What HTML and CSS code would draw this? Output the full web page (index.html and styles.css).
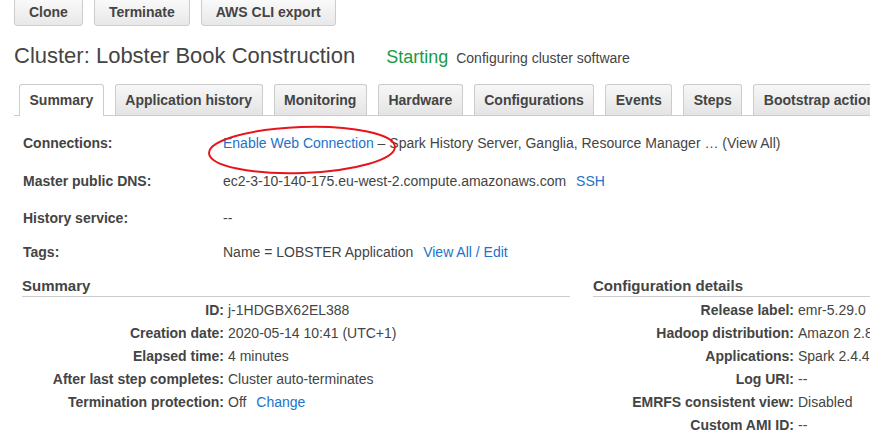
FILE: index.html
```html
<!DOCTYPE html>
<html>
<head>
<meta charset="utf-8">
<link rel="stylesheet" href="styles.css">
</head>
<body>
<div class="page">
  <div class="toolbar">
    <button class="btn">Clone</button>
    <button class="btn">Terminate</button>
    <button class="btn">AWS CLI export</button>
  </div>
  <div class="title-row">
    <h1 class="title">Cluster: Lobster Book Construction</h1>
    <span class="status">Starting</span>
    <span class="status-msg">Configuring cluster software</span>
  </div>
  <div class="tabs">
    <div class="tab active">Summary</div>
    <div class="tab">Application history</div>
    <div class="tab">Monitoring</div>
    <div class="tab">Hardware</div>
    <div class="tab">Configurations</div>
    <div class="tab">Events</div>
    <div class="tab">Steps</div>
    <div class="tab">Bootstrap actions</div>
  </div>
  <div class="info">
    <div class="info-row r1">
      <div class="info-label">Connections:</div>
      <div class="info-value"><a class="link">Enable Web Connection</a> – Spark History Server, Ganglia, Resource Manager … (View All)</div>
    </div>
    <div class="info-row r2">
      <div class="info-label">Master public DNS:</div>
      <div class="info-value">ec2-3-10-140-175.eu-west-2.compute.amazonaws.com <a class="link sp">SSH</a></div>
    </div>
    <div class="info-row r3">
      <div class="info-label">History service:</div>
      <div class="info-value">--</div>
    </div>
    <div class="info-row r4">
      <div class="info-label">Tags:</div>
      <div class="info-value">Name = LOBSTER Application <a class="link sp">View All / Edit</a></div>
    </div>
    <svg class="circle" width="200" height="60" viewBox="0 0 200 60">
      <ellipse cx="100" cy="30" rx="93" ry="23" fill="none" stroke="#e8141b" stroke-width="2" transform="rotate(-2 100 30)"/>
    </svg>
  </div>
  <div class="sections">
    <div class="section left">
      <div class="section-head">Summary</div>
      <div class="kv">
        <div class="k">ID:</div><div class="v">j-1HDGBX62EL388</div>
        <div class="k">Creation date:</div><div class="v">2020-05-14 10:41 (UTC+1)</div>
        <div class="k">Elapsed time:</div><div class="v">4 minutes</div>
        <div class="k">After last step completes:</div><div class="v">Cluster auto-terminates</div>
        <div class="k">Termination protection:</div><div class="v">Off <a class="link sp">Change</a></div>
      </div>
    </div>
    <div class="section right">
      <div class="section-head">Configuration details</div>
      <div class="kv">
        <div class="k">Release label:</div><div class="v">emr-5.29.0</div>
        <div class="k">Hadoop distribution:</div><div class="v">Amazon 2.8.5</div>
        <div class="k">Applications:</div><div class="v">Spark 2.4.4</div>
        <div class="k">Log URI:</div><div class="v">--</div>
        <div class="k">EMRFS consistent view:</div><div class="v">Disabled</div>
        <div class="k">Custom AMI ID:</div><div class="v">--</div>
      </div>
    </div>
  </div>
</div>
</body>
</html>
```
FILE: styles.css
```css
html, body {
  margin: 0;
  padding: 0;
  background: #fff;
  overflow: hidden;
}
body {
  font-family: "Liberation Sans", Arial, sans-serif;
  color: #444;
  font-size: 14px;
  width: 870px;
  height: 446px;
}
.page {
  padding-left: 14px;
  position: relative;
}
.toolbar {
  display: flex;
  gap: 11px;
  margin-top: -2px;
}
.btn {
  font-family: "Liberation Sans", Arial, sans-serif;
  font-size: 14px;
  font-weight: bold;
  color: #444;
  height: 28px;
  padding: 0 14px;
  border: 1px solid #ccc;
  border-radius: 3px;
  background: linear-gradient(#fafafa, #e8e8e8);
}
.title-row {
  display: flex;
  align-items: baseline;
  margin-top: 15px;
  height: 29px;
}
.title {
  font-size: 22px;
  font-weight: normal;
  margin: 0;
  color: #444;
  line-height: 29px;
}
.status {
  color: #1b9a45;
  font-size: 18px;
  margin-left: 31px;
}
.status-msg {
  margin-left: 8px;
  font-size: 14px;
}
.tabs {
  display: flex;
  gap: 11px;
  margin-top: 14px;
  padding-left: 5px;
  border-bottom: 1px solid #ccc;
  height: 31px;
  white-space: nowrap;
}
.tab {
  font-weight: bold;
  font-size: 14px;
  padding: 0 9.5px;
  height: 31px;
  line-height: 30px;
  border: 1px solid #ccc;
  border-bottom: none;
  border-radius: 3px 3px 0 0;
  background: linear-gradient(#f7f7f7, #e4e4e4);
  box-sizing: border-box;
  flex-shrink: 0;
}
.tab.active {
  background: #fff;
  height: 32px;
  margin-bottom: -1px;
}
.info {
  position: relative;
  padding-left: 9px;
  margin-top: 18px;
}
.info-row {
  display: flex;
  height: 18px;
  line-height: 18px;
}
.r2 { margin-top: 20px; }
.r3 { margin-top: 19px; }
.r4 { margin-top: 16px; }
.info-label {
  width: 200px;
  font-weight: bold;
  flex-shrink: 0;
}
.info-value {
  white-space: nowrap;
}
.link {
  color: #2272c9;
}
.sp {
  margin-left: 6px;
}
.circle {
  position: absolute;
  left: 188px;
  top: -14px;
}
.sections {
  display: flex;
  margin-top: 16px;
  padding-left: 8px;
}
.section.left {
  width: 548px;
}
.section.right {
  margin-left: 23px;
  flex: 1;
  overflow: hidden;
  white-space: nowrap;
}
.section-head {
  font-size: 15px;
  font-weight: bold;
  border-bottom: 1px solid #ccc;
  height: 19px;
  line-height: 18px;
}
.kv {
  display: grid;
  grid-template-columns: 202px 1fr;
  column-gap: 4px;
  margin-top: 2px;
}
.right .kv {
  grid-template-columns: 201px 1fr;
}
.k, .v {
  height: 23px;
  line-height: 23px;
  white-space: nowrap;
}
.k {
  text-align: right;
  font-weight: bold;
}
```
